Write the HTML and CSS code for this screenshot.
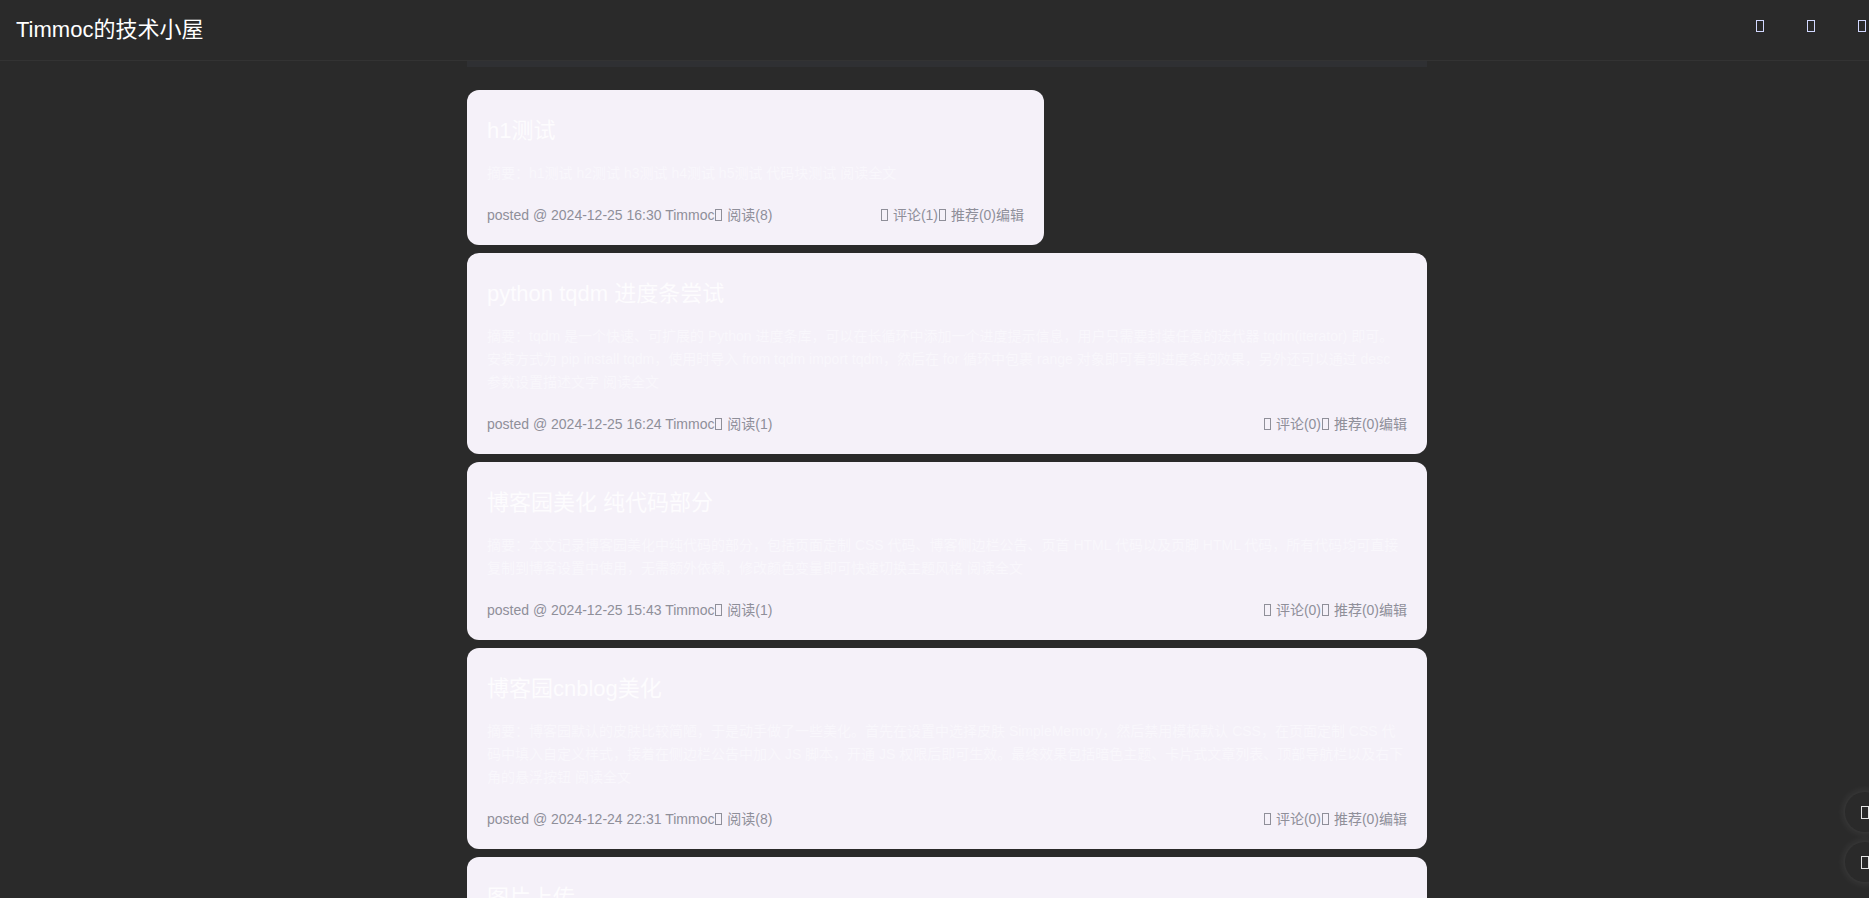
FILE: index.html
```html
<!DOCTYPE html>
<html lang="zh-CN">
<head>
    <meta charset="UTF-8">
    <meta name="viewport" content="width=device-width, initial-scale=1.0">
    <title>Timmoc的技术小屋</title>
    <link rel="stylesheet" href="styles.css">
</head>
<body>
    <header class="topbar">
        <a class="brand" href="#">Timmoc的技术小屋</a>
        <nav class="nav">
            <a href="#"><span class="ico ico-nav"></span></a>
            <a href="#"><span class="ico ico-nav"></span></a>
            <a href="#"><span class="ico ico-nav"></span></a>
        </nav>
    </header>

    <div class="main">
        <div class="strip"></div>

        <div class="post post-narrow">
            <h2 class="post-title">h1测试</h2>
            <div class="post-summary">摘要：h1测试 h2测试 h3测试 h4测试 h5测试 代码块测试 阅读全文</div>
            <div class="post-foot">
                <span>posted @ 2024-12-25 16:30 Timmoc<span class="ico"></span> 阅读(8)</span>
                <span><span class="ico"></span> 评论(1)<span class="ico"></span> 推荐(0)编辑</span>
            </div>
        </div>

        <div class="post">
            <h2 class="post-title">python tqdm 进度条尝试</h2>
            <div class="post-summary">摘要：tqdm 是一个快速、可扩展的 Python 进度条库，可以在长循环中添加一个进度提示信息，用户只需要封装任意的迭代器 tqdm(iterator) 即可。安装方式为 pip install tqdm，使用时导入 from tqdm import tqdm，然后在 for 循环中包裹 range 对象即可看到进度条的效果，另外还可以通过 desc 参数设置描述文字 阅读全文</div>
            <div class="post-foot">
                <span>posted @ 2024-12-25 16:24 Timmoc<span class="ico"></span> 阅读(1)</span>
                <span><span class="ico"></span> 评论(0)<span class="ico"></span> 推荐(0)编辑</span>
            </div>
        </div>

        <div class="post">
            <h2 class="post-title">博客园美化 纯代码部分</h2>
            <div class="post-summary">摘要：本文记录博客园美化中纯代码的部分，包括页面定制 CSS 代码、博客侧边栏公告、页首 HTML 代码以及页脚 HTML 代码，所有代码均可直接复制到博客设置中使用，无需额外依赖，修改颜色变量即可快速切换主题风格 阅读全文</div>
            <div class="post-foot">
                <span>posted @ 2024-12-25 15:43 Timmoc<span class="ico"></span> 阅读(1)</span>
                <span><span class="ico"></span> 评论(0)<span class="ico"></span> 推荐(0)编辑</span>
            </div>
        </div>

        <div class="post">
            <h2 class="post-title">博客园cnblog美化</h2>
            <div class="post-summary">摘要：博客园默认的皮肤比较简陋，于是动手做了一些美化。首先在设置中选择皮肤 SimpleMemory，然后禁用模板默认 CSS，在页面定制 CSS 代码中填入自定义样式，接着在侧边栏公告中加入 JS 脚本，开通 JS 权限后即可生效。最终效果包括暗色主题、卡片式文章列表、顶部导航栏以及右下角的悬浮按钮 阅读全文</div>
            <div class="post-foot">
                <span>posted @ 2024-12-24 22:31 Timmoc<span class="ico"></span> 阅读(8)</span>
                <span><span class="ico"></span> 评论(0)<span class="ico"></span> 推荐(0)编辑</span>
            </div>
        </div>

        <div class="post">
            <h2 class="post-title">图片上传</h2>
            <div class="post-summary">摘要：图片上传测试 阅读全文</div>
            <div class="post-foot">
                <span>posted @ 2024-12-24 21:10 Timmoc<span class="ico"></span> 阅读(3)</span>
                <span><span class="ico"></span> 评论(0)<span class="ico"></span> 推荐(0)编辑</span>
            </div>
        </div>
    </div>

    <div class="float-btns">
        <a class="float-btn" href="#"><span class="ico ico-float"></span></a>
        <a class="float-btn" href="#"><span class="ico ico-float"></span></a>
    </div>
</body>
</html>
```

FILE: styles.css
```css
body {
    margin: 0;
    background-color: #2a2a2a;
    font-family: "Liberation Sans", Arial, "Noto Sans CJK SC", sans-serif;
    color: #ddd;
}
a {
    color: inherit;
    text-decoration: none;
}
.topbar {
    height: 60px;
    border-bottom: 1px solid #333;
    display: flex;
    align-items: center;
    justify-content: space-between;
    padding: 0 2px 0 16px;
}
.brand {
    font-size: 22px;
    color: #fff;
    margin-top: -6px;
}
.nav {
    display: flex;
    gap: 41px;
    margin-top: -8px;
}
.ico {
    display: inline-block;
    width: 5px;
    height: 10px;
    border: 1px solid currentColor;
    margin: 0 1px;
    vertical-align: -1px;
}
.ico-nav {
    width: 6px;
    height: 10px;
    border-width: 1.5px;
    color: #d2d8ff;
}
.main {
    width: 960px;
    margin-left: 467px;
}
.strip {
    height: 6px;
    background-color: #2f3033;
    margin-bottom: 23px;
}
.post {
    background-color: #f5f1f9;
    border-radius: 12px;
    padding: 20px;
    margin-bottom: 8px;
}
.post-narrow {
    width: 537px;
}
.post-title {
    margin: 3px 0 0;
    font-size: 22px;
    font-weight: normal;
    line-height: 36px;
    color: #fdfcfe;
}
.post-summary {
    margin: 13px 0 20px;
    font-size: 14px;
    line-height: 23px;
    color: #f9f7fc;
}
.post-foot {
    display: flex;
    justify-content: space-between;
    font-size: 14px;
    line-height: 20px;
    color: #8f8f99;
}
.float-btns {
    position: fixed;
    right: -16px;
    bottom: 16px;
    display: flex;
    flex-direction: column;
    gap: 10px;
}
.float-btn {
    width: 40px;
    height: 40px;
    border-radius: 50%;
    background-color: #2a2a2a;
    box-shadow: 0 0 10px rgba(255, 255, 255, 0.12);
    display: flex;
    align-items: center;
    justify-content: center;
}
.ico-float {
    width: 6px;
    height: 11px;
    border-width: 1.5px;
    color: #e6e6e6;
}
```
